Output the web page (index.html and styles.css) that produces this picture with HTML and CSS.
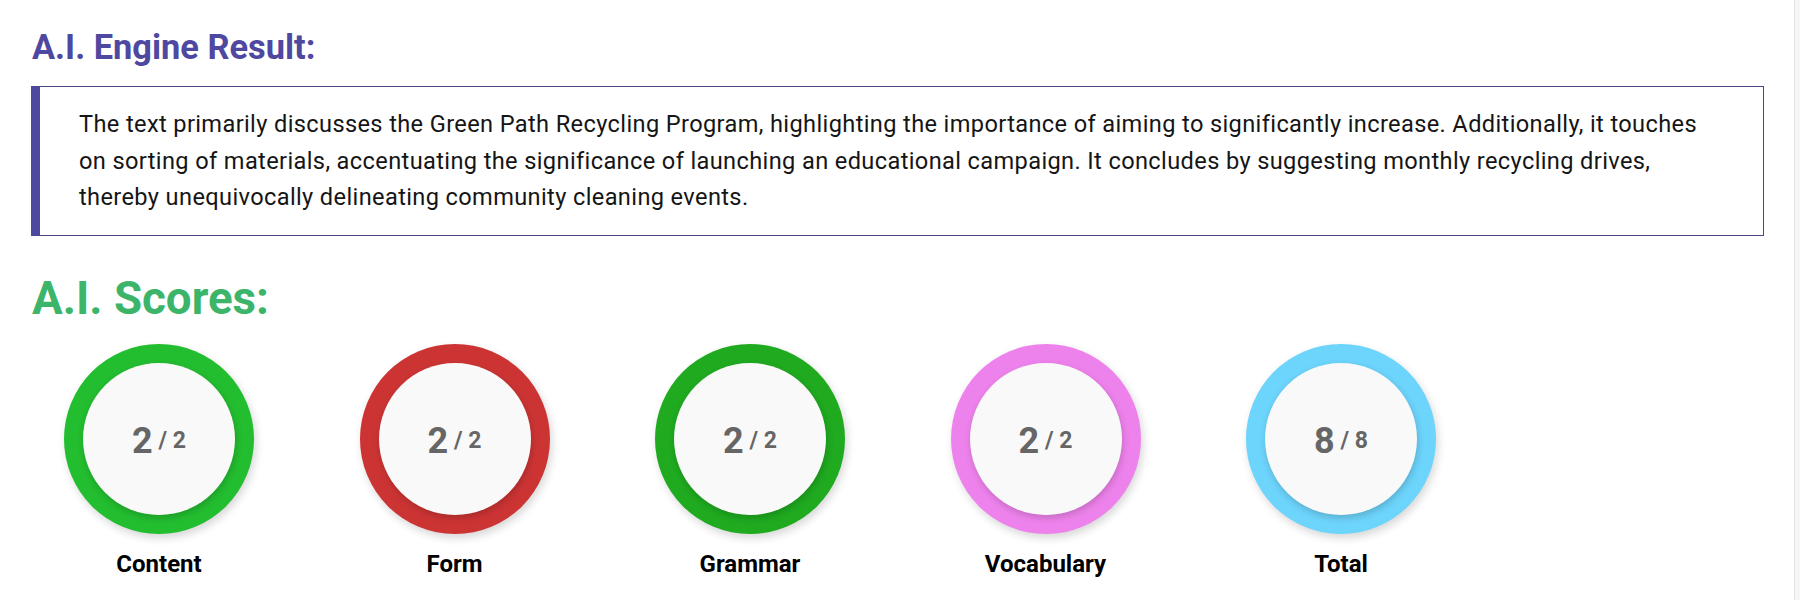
FILE: index.html
```html
<!DOCTYPE html>
<html lang="en">
<head>
<meta charset="utf-8">
<title>A.I. Engine Result</title>
<link rel="stylesheet" href="styles.css">
</head>
<body>
<div class="page">
  <main class="main">
    <h1 class="result-title">A.I. Engine Result:</h1>
    <div class="result-box">
      <p>The text primarily discusses the Green Path Recycling Program, highlighting the importance of aiming to significantly increase. Additionally, it touches on sorting of materials, accentuating the significance of launching an educational campaign. It concludes by suggesting monthly recycling drives, thereby unequivocally delineating community cleaning events.</p>
    </div>
    <h2 class="scores-title">A.I. Scores:</h2>
    <div class="scores">
      <div class="score">
        <div class="ring ring-content"><div class="inner"><span class="big">2</span><span class="small"> / 2</span></div></div>
        <div class="label">Content</div>
      </div>
      <div class="score">
        <div class="ring ring-form"><div class="inner"><span class="big">2</span><span class="small"> / 2</span></div></div>
        <div class="label">Form</div>
      </div>
      <div class="score">
        <div class="ring ring-grammar"><div class="inner"><span class="big">2</span><span class="small"> / 2</span></div></div>
        <div class="label">Grammar</div>
      </div>
      <div class="score">
        <div class="ring ring-vocab"><div class="inner"><span class="big">2</span><span class="small"> / 2</span></div></div>
        <div class="label">Vocabulary</div>
      </div>
      <div class="score">
        <div class="ring ring-total"><div class="inner"><span class="big">8</span><span class="small"> / 8</span></div></div>
        <div class="label">Total</div>
      </div>
    </div>
  </main>
  <div class="scroll-track"></div>
</div>
</body>
</html>
```
FILE: styles.css
```css
html, body {
  margin: 0;
  padding: 0;
  background: #ffffff;
}
body {
  font-family: Roboto, "Liberation Sans", Arial, sans-serif;
}
.page {
  display: flex;
  height: 600px;
  overflow: hidden;
}
.main {
  flex: 1;
  padding: 27px 30px 0 31px;
  min-width: 0;
}
.scroll-track {
  width: 5px;
  background: #f6f6f6;
  border-left: 1px solid #e4e4e4;
}
.result-title {
  margin: 0 0 18px 1px;
  font-size: 34.4px;
  line-height: 41px;
  font-weight: 700;
  color: #4f48a0;
}
.result-box {
  border: 1px solid #4b4781;
  border-left: 9px solid #4f48a0;
  padding: 19px 40px 19px 39px;
}
.result-box p {
  margin: 0;
  font-size: 23.6px;
  letter-spacing: 0.37px;
  line-height: 36.7px;
  color: #151515;
}
.scores-title {
  margin: 36px 0 19px 1px;
  font-size: 45.7px;
  line-height: 53px;
  font-weight: 700;
  color: #3cb56a;
}
.scores {
  display: flex;
  gap: 105.5px;
  padding-left: 33px;
}
.score {
  display: flex;
  flex-direction: column;
  align-items: center;
  width: 190px;
}
.ring {
  width: 190px;
  height: 190px;
  border-radius: 50%;
  display: flex;
  align-items: center;
  justify-content: center;
  box-shadow: 2px 4px 8px rgba(0, 0, 0, 0.16);
}
.ring-content { background: #23bd30; }
.ring-form { background: #cc3434; }
.ring-grammar { background: #1faa20; }
.ring-vocab { background: #ee82ec; }
.ring-total { background: #6dd4fb; }
.inner {
  box-sizing: border-box;
  width: 152px;
  height: 152px;
  padding-top: 4px;
  border-radius: 50%;
  background: #f9f9f9;
  box-shadow: 1px 3px 7px rgba(0, 0, 0, 0.18);
  display: flex;
  align-items: center;
  justify-content: center;
  color: #666666;
  font-weight: 700;
  line-height: 42px;
}
.big {
  font-size: 36px;
}
.small {
  font-size: 23px;
  white-space: pre;
}
.label {
  margin-top: 16px;
  font-size: 24px;
  line-height: 28px;
  font-weight: 700;
  color: #000000;
}
```
